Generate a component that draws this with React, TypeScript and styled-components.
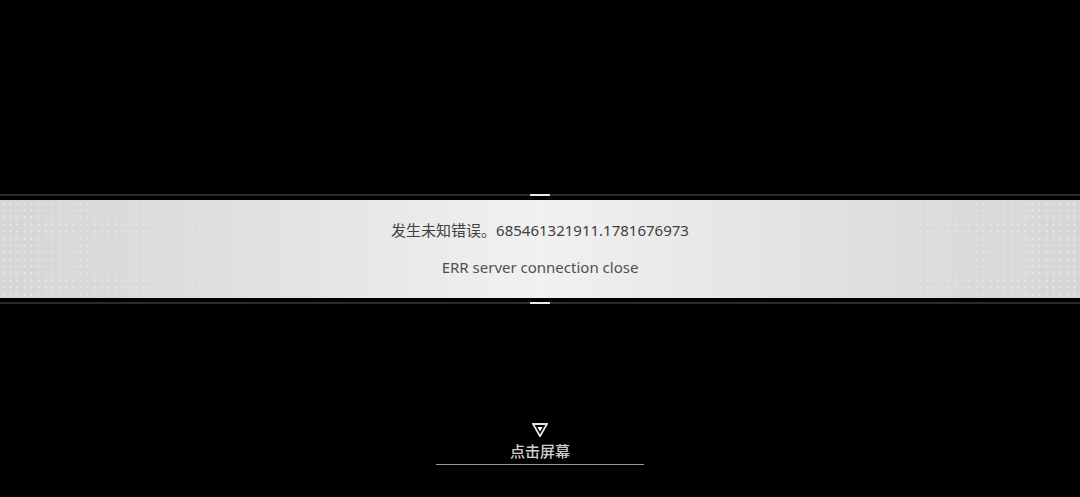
import styled, { createGlobalStyle } from "styled-components";

const Global = createGlobalStyle`
  html, body {
    margin: 0;
    padding: 0;
    background: #000;
  }
  body {
    font-family: "Noto Sans", "Noto Sans CJK SC", sans-serif;
  }
`;

const Screen = styled.main`
  width: 1080px;
  height: 497px;
  background: #000;
  display: grid;
  grid-template-rows: 1fr auto 1fr;
  overflow: hidden;
`;

const Notice = styled.section`
  grid-row: 2;
  display: flex;
  flex-direction: column;
  gap: 3px;
`;

const Rail = styled.div<{ $top?: boolean }>`
  position: relative;
  height: 2px;
  background: #2a2a2a;
  margin: ${(p) => (p.$top ? "0 0 1px" : "1px 0 0")};

  &::after {
    content: "";
    position: absolute;
    left: 50%;
    top: 0;
    width: 20px;
    height: 2px;
    transform: translateX(-50%);
    background: #e8e8e8;
    box-shadow: -6px 0 4px -2px rgba(255, 255, 255, 0.25),
      6px 0 4px -2px rgba(255, 255, 255, 0.25);
  }
`;

const Band = styled.div`
  position: relative;
  height: 98px;
  display: flex;
  flex-direction: column;
  align-items: center;
  justify-content: center;
  gap: 17px;
  background: linear-gradient(
    90deg,
    #d6d6d6 0%,
    #dcdcdc 15%,
    #e6e6e6 32%,
    #f1f1f1 50%,
    #e6e6e6 68%,
    #dcdcdc 85%,
    #d6d6d6 100%
  );

  &::before {
    content: "";
    position: absolute;
    inset: 0;
    background-image: radial-gradient(
      circle,
      rgba(255, 255, 255, 0.5) 0.8px,
      transparent 1.3px
    );
    background-size: 7px 7px;
    -webkit-mask-image: linear-gradient(
      90deg,
      #000 0%,
      rgba(0, 0, 0, 0.5) 14%,
      transparent 26%,
      transparent 74%,
      rgba(0, 0, 0, 0.5) 86%,
      #000 100%
    );
    mask-image: linear-gradient(
      90deg,
      #000 0%,
      rgba(0, 0, 0, 0.5) 14%,
      transparent 26%,
      transparent 74%,
      rgba(0, 0, 0, 0.5) 86%,
      #000 100%
    );
  }
`;

const Message = styled.p<{ $muted?: boolean }>`
  position: relative;
  margin: 0;
  font-size: 15px;
  font-weight: 400;
  line-height: 20px;
  color: ${(p) => (p.$muted ? "#505050" : "#404040")};
`;

const Prompt = styled.div`
  grid-row: 3;
  align-self: end;
  justify-self: center;
  display: flex;
  flex-direction: column;
  align-items: center;
  padding-bottom: 32px;
`;

const Arrow = styled.svg`
  width: 16px;
  height: 14px;
  display: block;
  margin-bottom: 4px;
`;

const PromptLabel = styled.div`
  width: 208px;
  text-align: center;
  font-family: "Noto Sans CJK SC", sans-serif;
  font-size: 15px;
  font-weight: 500;
  line-height: 20px;
  color: #cfcfcf;
  padding-bottom: 3px;
  border-bottom: 1px solid #9a9a9a;
`;

export default function App() {
  return (
    <>
      <Global />
      <Screen>
        <Notice>
          <Rail $top />
          <Band>
            <Message>发生未知错误。685461321911.1781676973</Message>
            <Message $muted>ERR server connection close</Message>
          </Band>
          <Rail />
        </Notice>
        <Prompt>
          <Arrow viewBox="0 0 16 14">
            <path
              d="M1 1 H15 L8 13.2 Z"
              fill="none"
              stroke="#e6e6e6"
              strokeWidth="1.8"
              strokeLinejoin="miter"
            />
            <path d="M5.4 4 H10.6 L8 8.6 Z" fill="#ffffff" />
          </Arrow>
          <PromptLabel>点击屏幕</PromptLabel>
        </Prompt>
      </Screen>
    </>
  );
}
